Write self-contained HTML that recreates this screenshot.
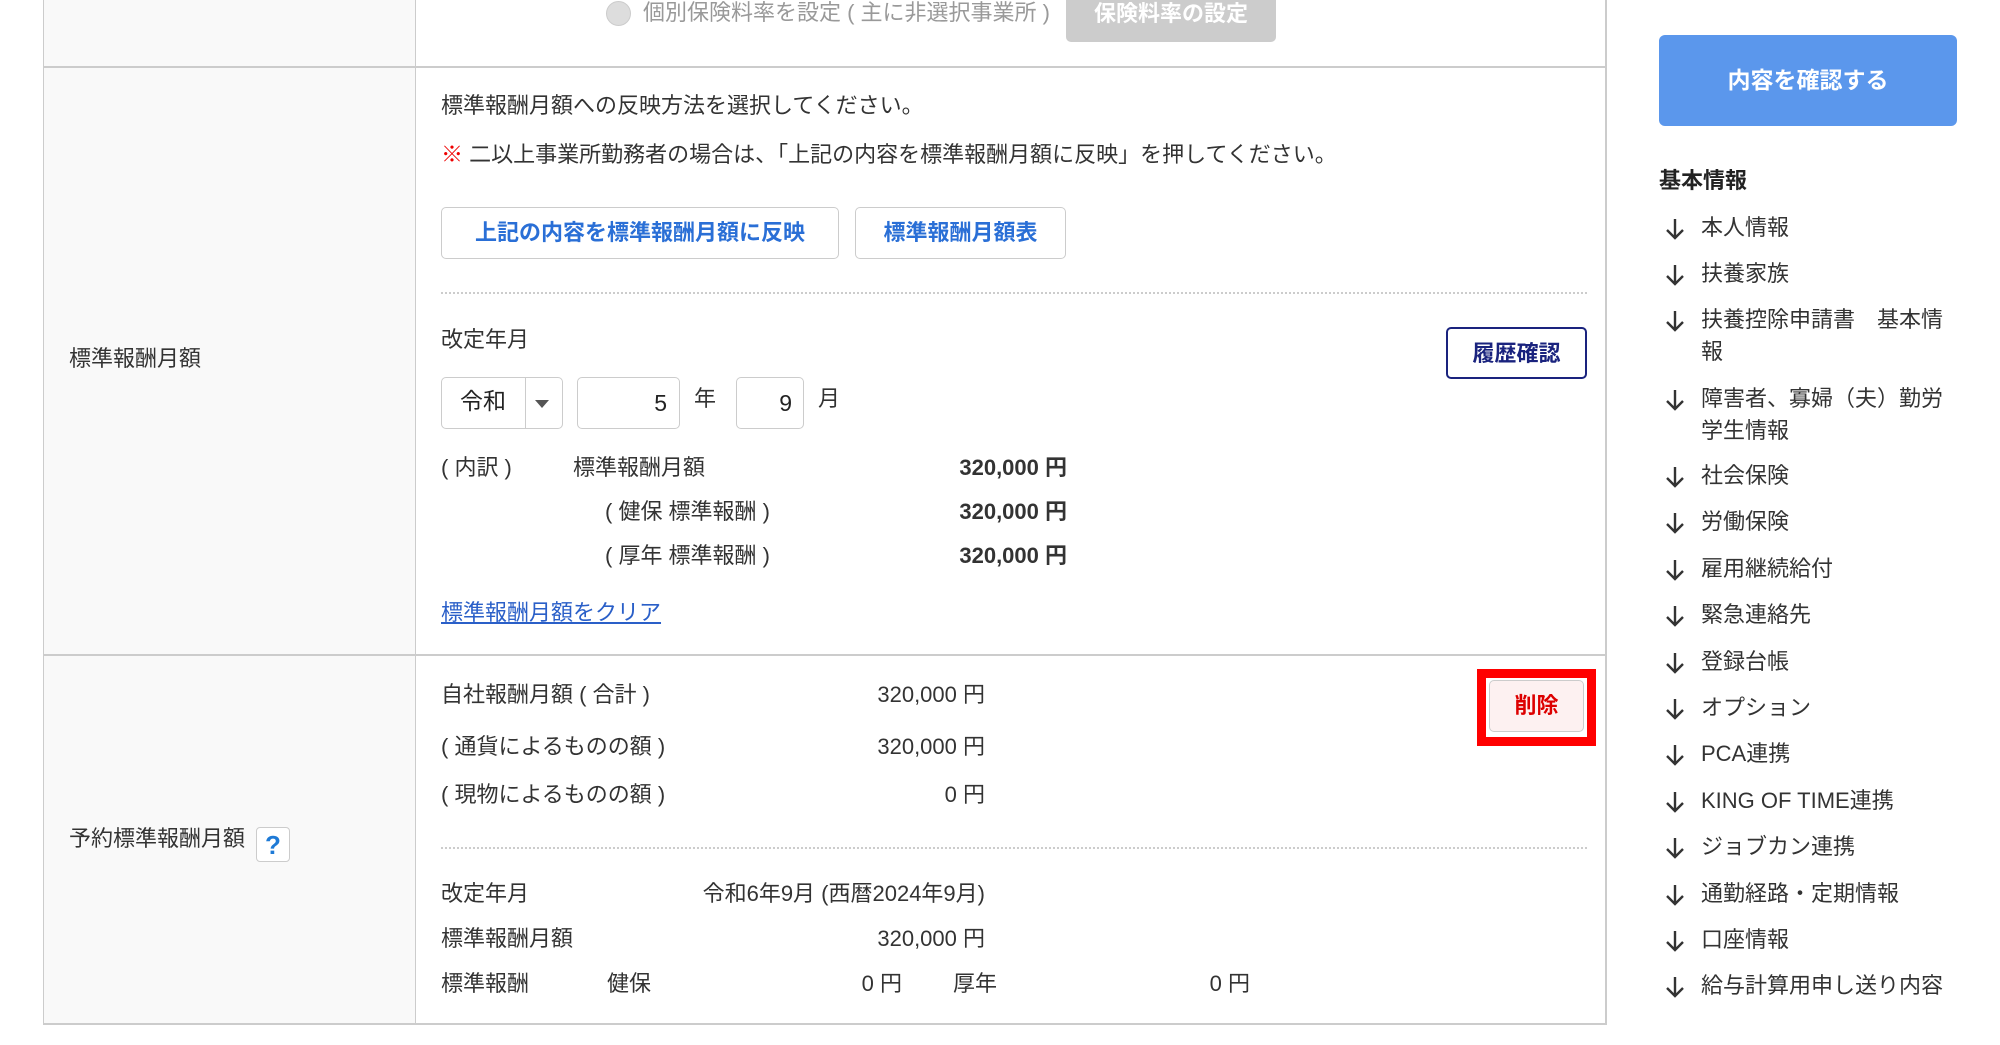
<!DOCTYPE html>
<html><head><meta charset="utf-8"><style>
body{margin:0;width:2000px;height:1045px;background:#fff;position:relative;overflow:hidden;font-family:"Liberation Sans","Noto Sans CJK JP",sans-serif;color:#333}
.a{position:absolute}
.t{position:absolute;line-height:32px;white-space:nowrap;font-size:22px}
.r{text-align:right}
.b{font-weight:bold}
.btn{position:absolute;box-sizing:border-box;border:1px solid #ccc;border-radius:5px;background:#fff;text-align:center;font-weight:bold;font-size:22px;white-space:nowrap}
.arr{position:absolute;left:1664px;width:22px;height:24px}
</style></head><body>
<div class="a" style="left:43px;top:0;width:373px;height:1024px;background:#f9f9f9"></div>
<div class="a" style="left:43px;top:0;width:1px;height:1025px;background:#ccc"></div>
<div class="a" style="left:415px;top:0;width:1px;height:1025px;background:#ccc"></div>
<div class="a" style="left:1605px;top:0;width:2px;height:1025px;background:#ccc"></div>
<div class="a" style="left:43px;top:66px;width:1564px;height:2px;background:#ccc"></div>
<div class="a" style="left:43px;top:654px;width:1564px;height:2px;background:#ccc"></div>
<div class="a" style="left:43px;top:1023px;width:1564px;height:2px;background:#ccc"></div>

<div class="a" style="left:606px;top:1px;width:25px;height:25px;border-radius:50%;background:#ddd;border:1px solid #ccc;box-sizing:border-box"></div>
<div class="t" style="left:643px;top:-3px;color:#999">個別保険料率を設定 ( 主に非選択事業所 )</div>
<div class="a" style="left:1066px;top:-6px;width:210px;height:48px;background:#ccc;border-radius:5px;color:#fff;font-weight:bold;font-size:22px;text-align:center;line-height:40px">保険料率の設定</div>

<div class="t" style="left:69px;top:343px">標準報酬月額</div>
<div class="t" style="left:441px;top:90px">標準報酬月額への反映方法を選択してください。</div>
<div class="t" style="left:441px;top:139px"><span style="color:#e00">※</span> 二以上事業所勤務者の場合は、「上記の内容を標準報酬月額に反映」を押してください。</div>
<div class="btn" style="left:441px;top:207px;width:398px;height:52px;line-height:50px;color:#2a6fd6">上記の内容を標準報酬月額に反映</div>
<div class="btn" style="left:855px;top:207px;width:211px;height:52px;line-height:50px;color:#2a6fd6">標準報酬月額表</div>
<div class="a" style="left:441px;top:292px;width:1146px;border-top:2px dotted #ccc"></div>
<div class="t" style="left:441px;top:324px">改定年月</div>
<div class="btn" style="left:1446px;top:327px;width:141px;height:52px;line-height:50px;color:#1a237e;border:2px solid #1a237e">履歴確認</div>
<div class="a" style="left:441px;top:377px;width:122px;height:52px;border:1px solid #ccc;border-radius:5px;box-sizing:border-box"></div>
<div class="a" style="left:525px;top:378px;width:1px;height:50px;background:#ccc"></div>
<div class="t" style="left:460px;top:385px;font-size:23px;color:#222">令和</div>
<div class="a" style="left:535px;top:400px;width:0;height:0;border-left:7px solid transparent;border-right:7px solid transparent;border-top:8px solid #555"></div>
<div class="a" style="left:577px;top:377px;width:103px;height:52px;border:1px solid #ccc;border-radius:5px;box-sizing:border-box"></div>
<div class="t r" style="left:577px;top:387px;width:90px;font-size:23px;color:#222">5</div>
<div class="t" style="left:694px;top:383px">年</div>
<div class="a" style="left:736px;top:377px;width:68px;height:52px;border:1px solid #ccc;border-radius:5px;box-sizing:border-box"></div>
<div class="t r" style="left:736px;top:387px;width:56px;font-size:23px;color:#222">9</div>
<div class="t" style="left:818px;top:383px">月</div>
<div class="t" style="left:441px;top:452px">( 内訳 )</div>
<div class="t" style="left:573px;top:452px">標準報酬月額</div>
<div class="t r b" style="left:875px;top:452px;width:192px">320,000 円</div>
<div class="t" style="left:605px;top:496px">( 健保 標準報酬 )</div>
<div class="t r b" style="left:875px;top:496px;width:192px">320,000 円</div>
<div class="t" style="left:605px;top:540px">( 厚年 標準報酬 )</div>
<div class="t r b" style="left:875px;top:540px;width:192px">320,000 円</div>
<div class="t" style="left:441px;top:597px;color:#2a5fc8;text-decoration:underline">標準報酬月額をクリア</div>

<div class="t" style="left:69px;top:823px">予約標準報酬月額</div>
<div class="a" style="left:256px;top:827px;width:34px;height:35px;border:1px solid #ccc;border-radius:4px;background:#fff;box-sizing:border-box;text-align:center;color:#1e7ad6;font-weight:bold;font-size:26px;line-height:34px">?</div>
<div class="t" style="left:441px;top:679px">自社報酬月額 ( 合計 )</div>
<div class="t r" style="left:785px;top:679px;width:200px">320,000 円</div>
<div class="t" style="left:441px;top:731px">( 通貨によるものの額 )</div>
<div class="t r" style="left:785px;top:731px;width:200px">320,000 円</div>
<div class="t" style="left:441px;top:779px">( 現物によるものの額 )</div>
<div class="t r" style="left:785px;top:779px;width:200px">0 円</div>
<div class="a" style="left:1477px;top:669px;width:119px;height:77px;border:9px solid #f00;box-sizing:border-box;background:#fff"></div>
<div class="btn" style="left:1489px;top:680px;width:95px;height:52px;line-height:50px;color:#d00;background:#fdf1f1">削除</div>
<div class="a" style="left:441px;top:847px;width:1146px;border-top:2px dotted #ccc"></div>
<div class="t" style="left:441px;top:878px">改定年月</div>
<div class="t r" style="left:635px;top:878px;width:350px">令和6年9月 (西暦2024年9月)</div>
<div class="t" style="left:441px;top:923px">標準報酬月額</div>
<div class="t r" style="left:785px;top:923px;width:200px">320,000 円</div>
<div class="t" style="left:441px;top:968px">標準報酬</div>
<div class="t" style="left:607px;top:968px">健保</div>
<div class="t r" style="left:776px;top:968px;width:126px">0 円</div>
<div class="t" style="left:953px;top:968px">厚年</div>
<div class="t r" style="left:1095px;top:968px;width:155px">0 円</div>

<div class="a" style="left:1659px;top:35px;width:298px;height:91px;background:#5b97ec;border-radius:6px;color:#fff;font-weight:bold;font-size:23px;text-align:center;line-height:91px">内容を確認する</div>
<div class="t b" style="left:1659px;top:165px;color:#222">基本情報</div>
<svg width="0" height="0" style="position:absolute"><defs><symbol id="ar" viewBox="0 0 22 24"><path d="M11 2V21M3 13L11 21L19 13" fill="none" stroke="#333" stroke-width="2.4"/></symbol></defs></svg>
<div style="position:absolute;left:0;top:0">
<svg class="arr" style="top:217px"><use href="#ar"/></svg><div class="t" style="left:1701px;top:212px">本人情報</div>
<svg class="arr" style="top:263px"><use href="#ar"/></svg><div class="t" style="left:1701px;top:258px">扶養家族</div>
<svg class="arr" style="top:309px"><use href="#ar"/></svg><div class="t" style="left:1701px;top:304px">扶養控除申請書　基本情<br>報</div>
<svg class="arr" style="top:388px"><use href="#ar"/></svg><div class="t" style="left:1701px;top:383px">障害者、寡婦（夫）勤労<br>学生情報</div>
<svg class="arr" style="top:465px"><use href="#ar"/></svg><div class="t" style="left:1701px;top:460px">社会保険</div>
<svg class="arr" style="top:511px"><use href="#ar"/></svg><div class="t" style="left:1701px;top:506px">労働保険</div>
<svg class="arr" style="top:558px"><use href="#ar"/></svg><div class="t" style="left:1701px;top:553px">雇用継続給付</div>
<svg class="arr" style="top:604px"><use href="#ar"/></svg><div class="t" style="left:1701px;top:599px">緊急連絡先</div>
<svg class="arr" style="top:651px"><use href="#ar"/></svg><div class="t" style="left:1701px;top:646px">登録台帳</div>
<svg class="arr" style="top:697px"><use href="#ar"/></svg><div class="t" style="left:1701px;top:692px">オプション</div>
<svg class="arr" style="top:743px"><use href="#ar"/></svg><div class="t" style="left:1701px;top:738px">PCA連携</div>
<svg class="arr" style="top:790px"><use href="#ar"/></svg><div class="t" style="left:1701px;top:785px">KING OF TIME連携</div>
<svg class="arr" style="top:836px"><use href="#ar"/></svg><div class="t" style="left:1701px;top:831px">ジョブカン連携</div>
<svg class="arr" style="top:883px"><use href="#ar"/></svg><div class="t" style="left:1701px;top:878px">通勤経路・定期情報</div>
<svg class="arr" style="top:929px"><use href="#ar"/></svg><div class="t" style="left:1701px;top:924px">口座情報</div>
<svg class="arr" style="top:975px"><use href="#ar"/></svg><div class="t" style="left:1701px;top:970px">給与計算用申し送り内容</div>
</div>
</body></html>
